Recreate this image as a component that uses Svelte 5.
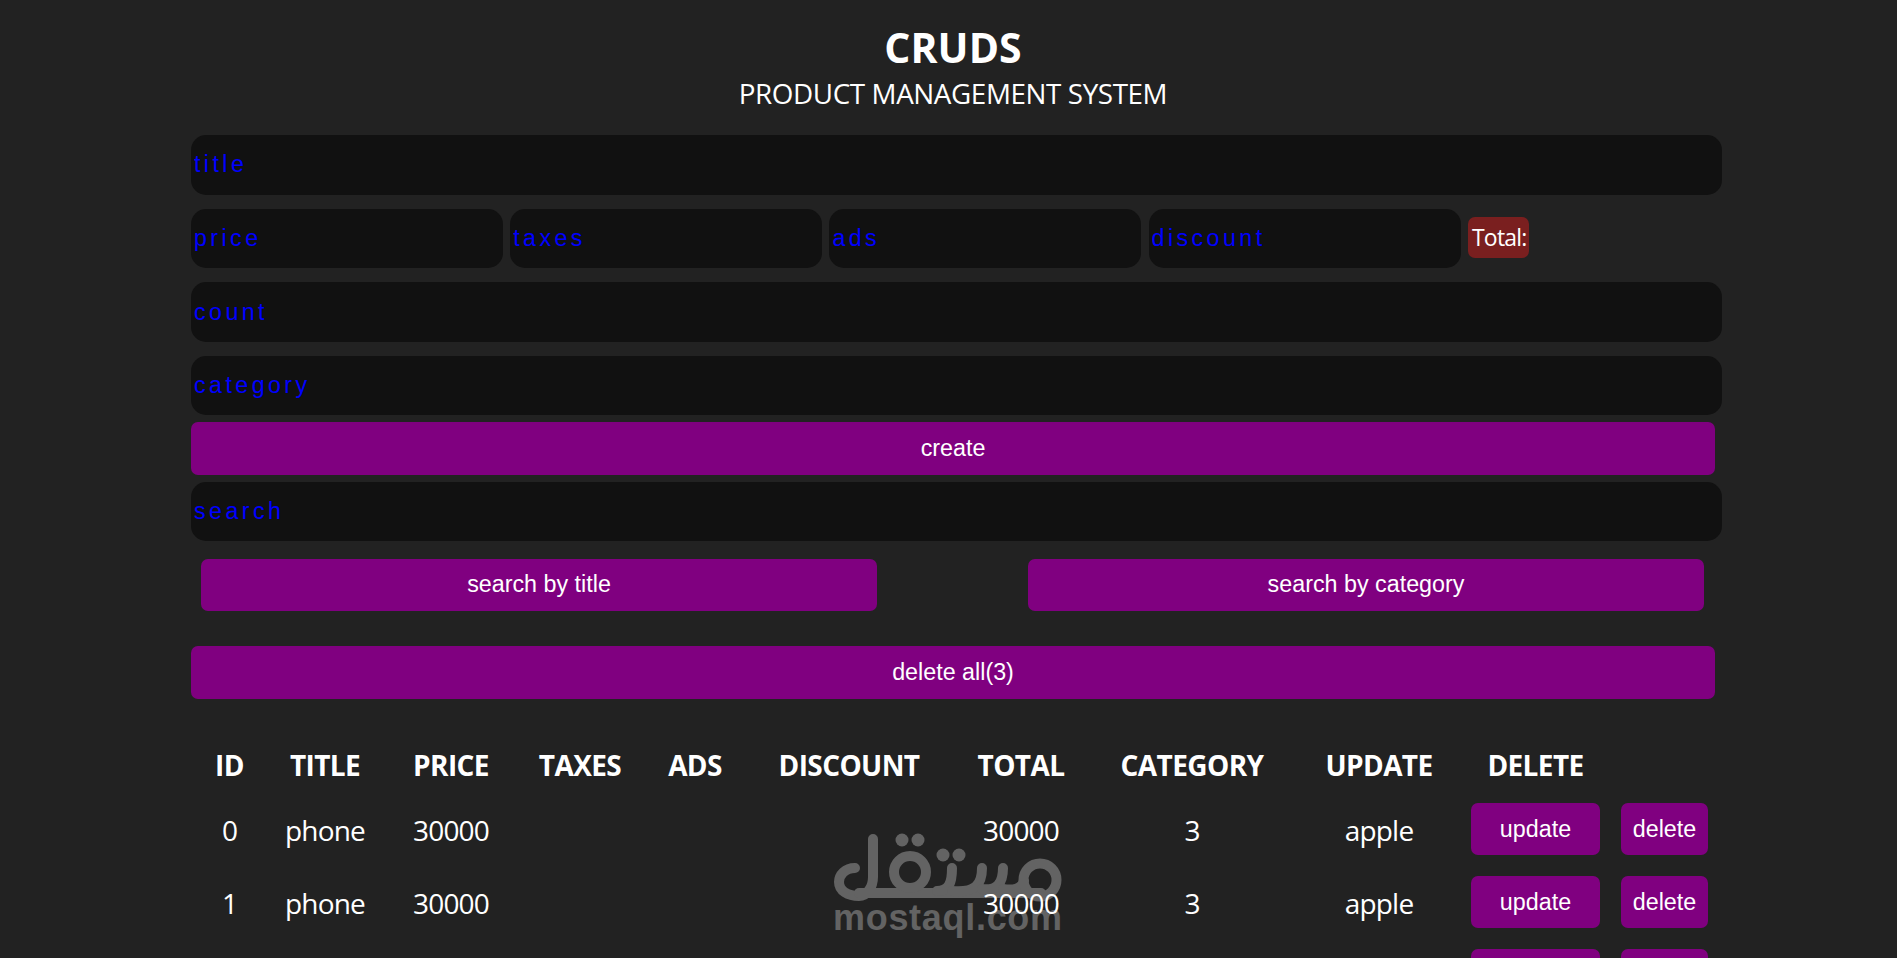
<script>
	const products = [
		{ id: 0, title: "phone", price: 30000, total: 30000, count: 3, category: "apple" },
		{ id: 1, title: "phone", price: 30000, total: 30000, count: 3, category: "apple" },
		{ id: 2, title: "phone", price: 30000, total: 30000, count: 3, category: "apple" }
	];
	const headers = ["ID", "TITLE", "PRICE", "TAXES", "ADS", "DISCOUNT", "TOTAL", "CATEGORY", "UPDATE", "DELETE", ""];
</script>

<div class="page">
	<div class="crud">
		<div class="head">
			<h1>CRUDS</h1>
			<p>PRODUCT MANAGEMENT SYSTEM</p>
		</div>

		<div class="inputs">
			<input type="text" placeholder="title" />
			<div class="price">
				<input type="number" placeholder="price" />
				<input type="number" placeholder="taxes" />
				<input type="number" placeholder="ads" />
				<input type="number" placeholder="discount" />
				<small>Total:</small>
			</div>
			<input type="number" placeholder="count" />
			<input class="last" type="text" placeholder="category" />
			<button class="wide">create</button>
		</div>

		<input class="search" type="text" placeholder="search" />
		<div class="btnSearch">
			<button>search by title</button>
			<button>search by category</button>
		</div>
		<button class="wide">delete all(3)</button>

		<table>
			<thead>
				<tr>
					{#each headers as h}
						<th>{h}</th>
					{/each}
				</tr>
			</thead>
			<tbody>
				{#each products as p}
					<tr>
						<td>{p.id}</td>
						<td>{p.title}</td>
						<td>{p.price}</td>
						<td></td>
						<td></td>
						<td></td>
						<td>{p.total}</td>
						<td>{p.count}</td>
						<td>{p.category}</td>
						<td class="act"><button class="upd">update</button></td>
						<td class="act"><button class="del">delete</button></td>
					</tr>
				{/each}
			</tbody>
		</table>
	</div>

	<div class="watermark">
		<svg width="240" height="78" viewBox="0 0 240 78" fill="none" stroke="#636363" stroke-width="10" stroke-linecap="round">
			<path d="M30 43 C20 43 14 50 14 57 C14 66 23 71 34 71 C42 71 48 62 48 52 V14" />
			<path d="M34 68 H216" />
			<circle cx="85" cy="47" r="16" />
			<circle cx="77" cy="15" r="6.5" fill="#636363" stroke="none" />
			<circle cx="93" cy="15" r="6.5" fill="#636363" stroke="none" />
			<circle cx="118" cy="30" r="6.5" fill="#636363" stroke="none" />
			<circle cx="134" cy="30" r="6.5" fill="#636363" stroke="none" />
			<path d="M112 66 C124 66 127 58 127 43" />
			<path d="M127 66 C150 68 157 60 157 43" />
			<path d="M157 64 C172 66 178 58 178 43" />
			<path d="M178 64 C190 66 197 62 199 56" />
			<circle cx="215" cy="55" r="16.5" />
		</svg>
		<span>mostaql.com</span>
	</div>
</div>

<style>
	:global(body) {
		margin: 0;
		background: #222;
	}

	.page {
		position: relative;
		height: 958px;
		overflow: hidden;
		background: #222;
		color: #fff;
		font-family: "Open Sans", sans-serif;
	}

	.crud {
		position: relative;
		z-index: 1;
		width: 1524px;
		margin-left: 191px;
		padding-top: 23px;
	}

	.head {
		height: 112px;
		text-align: center;
	}

	h1 {
		margin: 0;
		font-size: 41px;
		line-height: 48px;
		font-weight: 700;
		letter-spacing: 0.1px;
	}

	.head p {
		margin: 3px 0 0;
		font-size: 27.8px;
		line-height: 38px;
		letter-spacing: -0.4px;
	}

	input {
		display: block;
		box-sizing: border-box;
		width: 1531px;
		height: 59.5px;
		margin: 0 0 14.17px;
		padding: 0 3px;
		border: none;
		outline: none;
		border-radius: 15px;
		background: #111;
		color: #fff;
		font-family: "Liberation Sans", Arial, sans-serif;
		font-size: 23.3px;
		letter-spacing: 3.4px;
	}

	input::placeholder {
		color: #0000ff;
		opacity: 1;
	}

	.price {
		display: flex;
		align-items: center;
		gap: 7.2px;
	}

	.price input {
		width: 312px;
	}

	small {
		display: flex;
		align-items: center;
		justify-content: center;
		box-sizing: border-box;
		width: 61px;
		height: 41px;
		margin: 0 0 16px 0;
		padding: 0 0 0 2px;
		border-radius: 7px;
		background: #7a1f1f;
		font-size: 23px;
		letter-spacing: -0.8px;
	}

	input.last {
		margin-bottom: 6.5px;
	}

	button {
		border: none;
		border-radius: 7px;
		background: #800080;
		color: #fff;
		font-family: "Liberation Sans", Arial, sans-serif;
		font-size: 23.3px;
		padding: 0;
	}

	.wide {
		display: block;
		width: 100%;
		height: 53px;
	}

	.search {
		margin: 7px 0 17.5px;
	}

	.btnSearch {
		display: flex;
		justify-content: space-between;
		padding: 0 11px 0 10px;
		margin-bottom: 35px;
	}

	.btnSearch button {
		width: 676px;
		height: 52px;
	}

	table {
		table-layout: fixed;
		width: 1535px;
		margin-top: 36px;
		border-collapse: collapse;
	}

	th,
	td {
		padding: 0;
		text-align: center;
		font-size: 28px;
		letter-spacing: -0.8px;
	}

	th {
		height: 60px;
		font-weight: 700;
		letter-spacing: -0.6px;
	}

	td {
		height: 73px;
		padding-bottom: 2px;
		box-sizing: border-box;
	}

	th:nth-child(1) { width: 77px; }
	th:nth-child(2) { width: 114px; }
	th:nth-child(3) { width: 138px; }
	th:nth-child(4) { width: 120px; }
	th:nth-child(5) { width: 110px; }
	th:nth-child(6) { width: 198px; }
	th:nth-child(7) { width: 146px; }
	th:nth-child(8) { width: 196px; }
	th:nth-child(9) { width: 178px; }
	th:nth-child(10) { width: 135px; }
	th:nth-child(11) { width: 123px; }

	.act {
		vertical-align: top;
		padding: 8px 0 0;
	}

	.act button {
		display: block;
		height: 52px;
		margin: 0 auto;
		padding-top: 2px;
	}

	.upd {
		width: 129px;
	}

	.del {
		width: 87px;
	}

	.watermark {
		position: absolute;
		left: 825px;
		top: 825px;
		width: 240px;
		display: flex;
		flex-direction: column;
	}

	.watermark span {
		margin: -4px 0 0 8px;
		color: #636363;
		font-family: "Liberation Sans", Arial, sans-serif;
		font-weight: 700;
		font-size: 36px;
		line-height: 38px;
		letter-spacing: 0.7px;
		white-space: nowrap;
	}
</style>
